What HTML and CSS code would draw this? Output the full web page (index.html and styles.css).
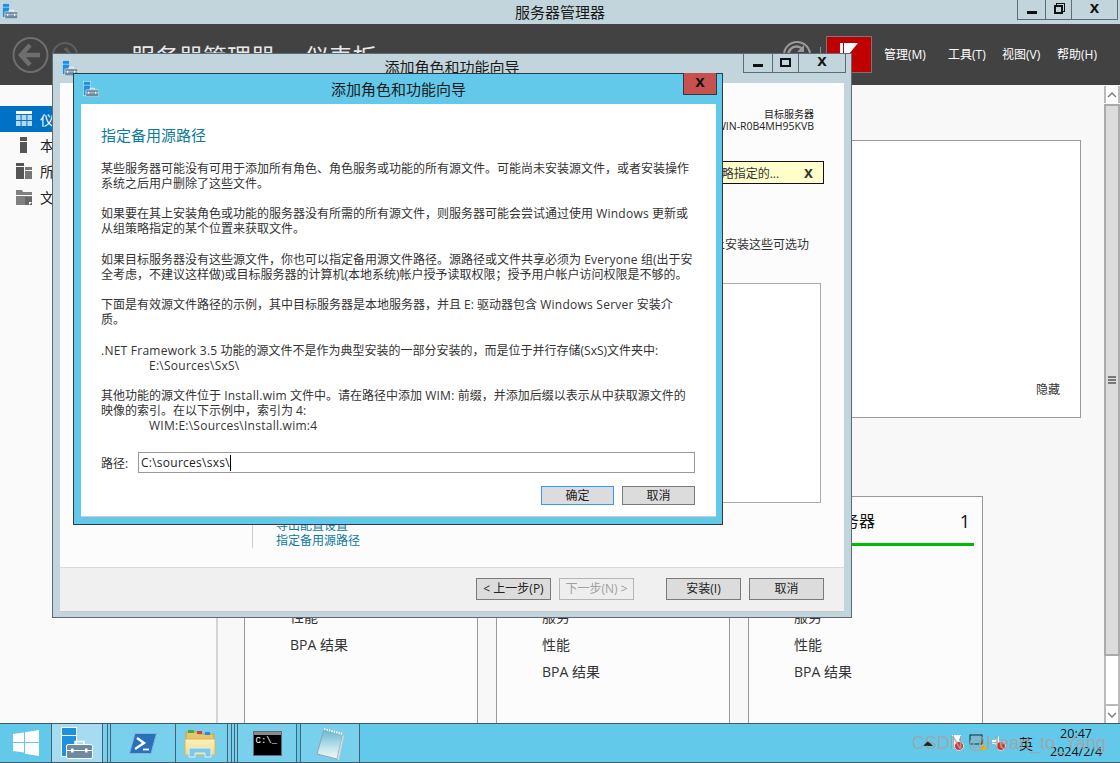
FILE: index.html
```html
<!DOCTYPE html>
<html lang="zh-CN">
<head>
<meta charset="utf-8">
<title>服务器管理器</title>
<link rel="stylesheet" href="styles.css">
</head>
<body>
<svg class="defs" width="0" height="0" aria-hidden="true">
  <defs>
    <linearGradient id="npg" x1="0" y1="0" x2="0" y2="1">
      <stop offset="0" stop-color="#5fb4cf"/><stop offset="0.6" stop-color="#bfe3ea"/><stop offset="1" stop-color="#f2f8f8"/>
    </linearGradient>
    <linearGradient id="fog" x1="0" y1="0" x2="0" y2="1">
      <stop offset="0" stop-color="#fdf2bd"/><stop offset="1" stop-color="#f3d789"/>
    </linearGradient>
  </defs>
  <symbol id="sm" viewBox="0 0 32 32">
    <rect x="0.5" y="0.5" width="15" height="29" fill="#1f8fe0" stroke="#fff"/>
    <line x1="1" y1="8.5" x2="15" y2="8.5" stroke="#fff"/>
    <path d="M14 18v-3.500h9V18" fill="none" stroke="#fff" stroke-width="1.600"/>
    <rect x="5.500" y="17.500" width="26" height="14" rx="1.500" fill="#6f8aa0" stroke="#fff"/>
    <line x1="6" y1="23.500" x2="31" y2="23.500" stroke="#fff"/>
    <rect x="10" y="21.500" width="2.500" height="4" fill="#fff"/>
    <rect x="24" y="21.500" width="2.500" height="4" fill="#fff"/>
  </symbol>
</svg>

<div class="app">
  <div class="titlebar">
    <svg class="tb-icon" width="16" height="16"><use href="#sm"/></svg>
    <span class="tb-title">服务器管理器</span>
    <div class="winbtns">
      <span class="wb wb-min"><i class="g-min"></i></span>
      <span class="wb wb-res"><i class="g-res"></i></span>
      <span class="wb wb-close">x</span>
    </div>
  </div>

  <header class="header">
    <svg class="nav-back" width="37" height="38" viewBox="0 0 37 38">
      <circle cx="18.500" cy="19" r="17" fill="none" stroke="#6e6e6e" stroke-width="2"/>
      <path d="M18 9l-9 10 9 10M9 19h19" fill="none" stroke="#6e6e6e" stroke-width="4.500"/>
    </svg>
    <svg class="nav-fwd" width="26" height="26" viewBox="0 0 26 26">
      <circle cx="13" cy="13" r="12" fill="none" stroke="#5f5f5f" stroke-width="2"/>
      <path d="M13 6l6 7-6 7M19 13H6" fill="none" stroke="#5f5f5f" stroke-width="3"/>
    </svg>
    <h1 class="h-title">服务器管理器 • 仪表板</h1>
    <svg class="refresh" width="30" height="30" viewBox="0 0 30 30">
      <circle cx="15" cy="15" r="13" fill="none" stroke="#9a9a9a" stroke-width="2"/>
      <path d="M21 10a8 8 0 1 0 1 7" fill="none" stroke="#9a9a9a" stroke-width="2.500"/>
      <path d="M22 5v7h-7z" fill="#9a9a9a"/>
    </svg>
    <span class="h-div"></span>
    <span class="flagbtn">
      <svg width="18" height="22" viewBox="0 0 18 22"><path d="M0 0h3v22H0zM4 0h14L4 17z" fill="#fff"/></svg>
    </span>
    <nav class="menu">
      <span>管理(M)</span><span>工具(T)</span><span>视图(V)</span><span>帮助(H)</span>
    </nav>
  </header>

  <div class="main">
    <aside class="sidebar">
      <div class="side-item side-on">
        <svg width="16" height="16" viewBox="0 0 16 16">
          <rect y="0" width="16" height="3" fill="#fff"/>
          <path d="M0 4h4.600v5H0zM5.600 4h4.800v5H5.600zM11.400 4H16v5h-4.600zM0 10h4.600v5H0zM5.600 10h4.800v5H5.600zM11.400 10H16v5h-4.600z" fill="#b5d8f0"/>
        </svg>
        <span>仪表板</span>
      </div>
      <div class="side-item">
        <svg width="16" height="16" viewBox="0 0 16 16">
          <rect x="4" width="7" height="4" fill="#555"/><rect x="4" y="5" width="7" height="11" fill="#555"/>
        </svg>
        <span>本地服务器</span>
      </div>
      <div class="side-item">
        <svg width="16" height="16" viewBox="0 0 16 16">
          <rect width="8" height="3" fill="#555"/><rect y="4" width="8" height="12" fill="#555"/>
          <rect x="9" y="4" width="7" height="3" fill="#777"/><rect x="9" y="8" width="7" height="8" fill="#777"/>
        </svg>
        <span>所有服务器</span>
      </div>
      <div class="side-item">
        <svg width="16" height="16" viewBox="0 0 16 16">
          <path d="M0 1h6l1 2h9v3H0zM0 7h16v9H0z" fill="#808080"/>
          <path d="M9 8h7v8H9z" fill="#666"/><path d="M13 13h3l-3 3z" fill="#fff"/>
        </svg>
        <span>文件和存储服务</span>
      </div>
    </aside>

    <section class="content">
      <div class="panel"><span>隐藏</span></div>
      <div class="cards">
        <article class="card">
          <div class="card-head"><span>本地服务器</span><b>1</b></div>
          <ul class="card-list"><li>可管理性</li><li>事件</li><li>性能</li><li>BPA 结果</li></ul>
        </article>
        <article class="card">
          <div class="card-head"><span>文件和存储服务</span><b>1</b></div>
          <ul class="card-list"><li>可管理性</li><li>事件</li><li>服务</li><li>性能</li><li>BPA 结果</li></ul>
        </article>
        <article class="card">
          <div class="card-head"><span>所有服务器</span><b>1</b></div>
          <ul class="card-list"><li>可管理性</li><li>事件</li><li>服务</li><li>性能</li><li>BPA 结果</li></ul>
        </article>
      </div>
    </section>

    <div class="scrollbar">
      <span class="sb-btn"><svg width="10" height="6" viewBox="0 0 10 6"><path d="M1 5l4-4 4 4" fill="none" stroke="#777" stroke-width="1.300"/></svg></span>
      <span class="sb-thumb"><i></i><i></i><i></i></span>
      <span class="sb-track"></span>
      <span class="sb-btn"><svg width="10" height="6" viewBox="0 0 10 6"><path d="M1 1l4 4 4-4" fill="none" stroke="#777" stroke-width="1.300"/></svg></span>
    </div>
  </div>

  <footer class="taskbar">
    <span class="task t-start">
      <svg width="26" height="26" viewBox="0 0 26 26"><path d="M0 4l11-1.500V12H0zM12 2.300L26 0v12H12zM0 13h11v9.500L0 21zM12 13h14v13l-14-2.300z" fill="#fff"/></svg>
    </span>
    <span class="task t-active"><svg width="32" height="32"><use href="#sm"/></svg></span>
    <span class="task t-sliver5"></span>
    <span class="task t-sliver3"></span>
    <span class="task t-ps">
      <svg width="28" height="21" viewBox="0 0 28 21">
        <path d="M6 .5h21.500L22 20.500H.5z" fill="#2a70b8" stroke="#7fb6e0"/>
        <path d="M8 5l7 5-9 6" fill="none" stroke="#fff" stroke-width="2.400"/>
        <path d="M14 16.500h6" stroke="#fff" stroke-width="1.800"/>
      </svg>
    </span>
    <span class="task t-ex">
      <svg class="ex-icon" width="32" height="30" viewBox="0 0 32 30">
        <path d="M2 4h11l2 2h15v18H2z" fill="#e8c56a" stroke="#c9a24a"/>
        <rect x="4" y="2" width="6" height="3" fill="#44aa44"/><rect x="13" y="3" width="5" height="3" fill="#cc4433"/><rect x="21" y="4" width="5" height="3" fill="#3388dd"/>
        <path d="M1 11h30v16H1z" fill="url(#fog)" stroke="#d6b45e"/>
        <path d="M5 29v-9h22v9h-6v-4H11v4z" fill="#7cc8ea" stroke="#d8f0fb"/>
      </svg>
    </span>
    <span class="task t-sliver4"></span>
    <span class="task t-sliver3"></span>
    <span class="task t-sliver3"></span>
    <span class="task t-cmd">
      <span class="cmd"><span class="cmd-bar"></span><span class="cmd-text">C:\_</span></span>
    </span>
    <span class="task t-np">
      <svg width="28" height="33" viewBox="0 0 28 33">
        <path d="M8 2l19 5-6 25L1 27z" fill="url(#npg)" stroke="#8aa6b4"/>
        <path d="M21 32l6-25 1 2-5 24z" fill="#cfd8dc"/>
        <path d="M8 2l19 5" stroke="#fff" stroke-dasharray="1.500 1" stroke-width="2"/>
      </svg>
    </span>
    <div class="tray">
      <svg class="tr-arrow" width="10" height="5" viewBox="0 0 10 5"><path d="M0 5l5-5 5 5z" fill="#222"/></svg>
      <svg width="16" height="18" viewBox="0 0 16 18"><path d="M3 1h1v14H3zM5 1h7l-2 5 2 5H5z" fill="#fff"/><circle cx="10" cy="12" r="4.500" fill="#d63030" stroke="#fff" stroke-width=".7"/></svg>
      <svg width="18" height="18" viewBox="0 0 18 18"><rect x="1" y="1" width="12" height="9" fill="none" stroke="#222"/><path d="M10 16l4-7 4 7z" fill="#f0b400"/></svg>
      <svg width="16" height="18" viewBox="0 0 16 18"><path d="M1 6h3l4-4v12l-4-4H1z" fill="#fff"/><circle cx="10" cy="12" r="4.500" fill="#d63030" stroke="#fff" stroke-width=".7"/></svg>
      <span class="tr-ime">英</span>
      <div class="clock"><span>20:47</span><span>2024/2/4</span></div>
    </div>
  </footer>
</div>

<div class="wizard">
  <div class="wiz-title">
    <svg class="wiz-icon" width="16" height="16"><use href="#sm"/></svg>
    <span class="tb-title">添加角色和功能向导</span>
    <div class="winbtns wiz-btns">
      <span class="wb wb-min2"><i class="g-min"></i></span>
      <span class="wb wb-res2"><i class="g-max"></i></span>
      <span class="wb wb-close2">x</span>
    </div>
  </div>
  <div class="wiz-inner">
    <div class="wiz-main">
      <div class="target"><p class="target-h">目标服务器</p><p>WIN-R0B4MH95KVB</p></div>
      <div class="notice"><span>您的部分源文件可能由组策略指定的...</span><b>x</b></div>
      <p class="wiz-intro">若要在此服务器上安装这些可选功</p>
      <div class="wiz-box"></div>
      <div class="wiz-links"><a>导出配置设置</a><a>指定备用源路径</a></div>
    </div>
    <div class="wiz-foot">
      <button class="btn">&lt; 上一步(P)</button>
      <button class="btn btn-off">下一步(N) &gt;</button>
      <button class="btn btn-install">安装(I)</button>
      <button class="btn">取消</button>
    </div>
  </div>
</div>

<div class="dialog">
  <div class="dlg-title">
    <svg class="dlg-icon" width="16" height="16"><use href="#sm"/></svg>
    <span class="tb-title">添加角色和功能向导</span>
    <span class="dlg-close">x</span>
  </div>
  <div class="dlg-body">
    <h2 class="dlg-h">指定备用源路径</h2>
    <p>某些服务器可能没有可用于添加所有角色、角色服务或功能的所有源文件。可能尚未安装源文件，或者安装操作<br>系统之后用户删除了这些文件。</p>
    <p>如果要在其上安装角色或功能的服务器没有所需的所有源文件，则服务器可能会尝试通过使用 <span class="lt">Windows</span> 更新或<br>从组策略指定的某个位置来获取文件。</p>
    <p>如果目标服务器没有这些源文件，你也可以指定备用源文件路径。源路径或文件共享必须为 <span class="lt">Everyone</span> 组(出于安<br>全考虑，不建议这样做)或目标服务器的计算机(本地系统)帐户授予读取权限；授予用户帐户访问权限是不够的。</p>
    <p>下面是有效源文件路径的示例，其中目标服务器是本地服务器，并且 E: 驱动器包含 <span class="lt">Windows Server</span> 安装介<br>质。</p>
    <p><span class="lt">.NET Framework 3.5</span> 功能的源文件不是作为典型安装的一部分安装的，而是位于并行存储(SxS)文件夹中:<br><span class="ind lt">E:\Sources\SxS\</span></p>
    <p>其他功能的源文件位于 <span class="lt">Install.wim</span> 文件中。请在路径中添加 <span class="lt">WIM:</span> 前缀，并添加后缀以表示从中获取源文件的<br>映像的索引。在以下示例中，索引为 4:<br><span class="ind lt">WIM:E:\Sources\Install.wim:4</span></p>
    <div class="path-row">
      <label class="path-l">路径:</label>
      <div class="path-in">C:\sources\sxs\<i class="caret"></i></div>
    </div>
    <div class="dlg-btns">
      <button class="btn dbtn dbtn-ok">确定</button>
      <button class="btn dbtn">取消</button>
    </div>
  </div>
</div>

<div class="watermark">CSDN @Heart_to_Yang</div>
</body>
</html>
```

FILE: styles.css
```css
* { box-sizing: border-box; }
html, body { margin: 0; padding: 0; }
body {
  position: relative;
  width: 1120px;
  height: 763px;
  overflow: hidden;
  font-family: "Open Sans", "Noto Sans CJK SC", sans-serif;
  font-size: 12px;
  color: #222;
  background: #f8f8f8;
}
p, h1, h2, ul { margin: 0; padding: 0; }
li { list-style: none; }
.defs { position: absolute; }
.app { display: flex; flex-direction: column; height: 763px; }

/* main title bar */
.titlebar {
  position: relative;
  flex: none;
  height: 24px;
  background: #c2d5dc;
  display: flex;
  align-items: center;
  justify-content: center;
}
.tb-title { font-size: 15px; line-height: 20px; color: #1a1a1a; }
.tb-icon { position: absolute; left: 2px; top: 3px; }
.winbtns { position: absolute; top: 0; right: 2px; display: flex; height: 20px; border: 1px solid #5f6b72; border-top: 0; }
.wb { display: flex; align-items: center; justify-content: center; border-left: 1px solid #5f6b72; padding-bottom: 3px; font: bold 17px/14px "Liberation Sans", sans-serif; color: #111; }
.wb:first-child { border-left: 0; }
.wb-min { width: 27px; }
.wb-res { width: 26px; }
.wb-close { width: 46px; }
.g-min { display: block; width: 10px; height: 3px; background: #111; margin-top: 9px; }
.g-res { display: block; width: 9px; height: 9px; margin-top: 3px; border: 2px solid #111; box-shadow: 2px -2px 0 -1px #c2d5dc, 2px -2px 0 0 #111; }
.g-max { display: block; width: 11px; height: 9px; margin-top: 3px; border: 2px solid #111; }

/* dark header */
.header {
  flex: none;
  height: 61px;
  background: #424242;
  display: flex;
  align-items: center;
  padding-left: 12px;
}
.nav-back { flex: none; }
.nav-fwd { flex: none; margin-left: 3px; }
.h-title {
  flex: none;
  margin: 4px 0 0 53px;
  width: 651px;
  font-size: 24px;
  font-weight: 400;
  word-spacing: 4px;
  line-height: 30px;
  color: #e8e8e8;
  white-space: nowrap;
}
.refresh { flex: none; }
.h-div { flex: none; width: 1px; height: 16px; margin: 0 5px 0 8px; background: #8a8a8a; }
.flagbtn {
  flex: none;
  width: 46px;
  height: 37px;
  padding-top: 6px;
  background: #c00000;
  border: 1px solid #777;
  display: flex;
  align-items: flex-start;
  justify-content: center;
}
.menu { display: grid; grid-template-columns: 64px 54px 55px auto; margin-left: 12px; color: #fff; white-space: nowrap; line-height: 16px; }

/* main area */
.main { flex: 1; min-height: 0; display: flex; overflow: hidden; }
.sidebar { flex: none; width: 218px; padding-top: 21px; background: #fafafa; border-right: 2px solid #d4d4d4; }
.side-item { height: 26px; display: flex; align-items: center; gap: 8px; padding-left: 16px; font-size: 14px; color: #222; }
.side-on { background: #0072c6; color: #fff; }
.content { flex: 1; min-width: 0; padding: 55px 23px 0 26px; }
.panel {
  height: 278px;
  background: #fff;
  border: 1px solid #999;
  display: flex;
  align-items: flex-end;
  justify-content: flex-end;
  padding: 0 20px 19px 0;
  line-height: 16px;
  color: #333;
}
.cards { display: flex; gap: 18px; margin-top: 78px; }
.card { flex: none; width: 234px; height: 240px; background: #fcfcfc; border: 1px solid #999; }
.card:last-child { width: 235px; }
.card-head {
  display: flex;
  justify-content: space-between;
  align-items: flex-start;
  height: 31px;
  margin: 15px 8px 0 19px;
  padding: 0 4px 0 27px;
  border-bottom: 3px solid #00bb00;
  box-sizing: content-box;
  font-size: 16px;
  line-height: 18px;
  color: #111;
}
.card-head b { font-size: 18px; font-weight: 400; }
.card-list { margin-top: 2px; padding-left: 45px; font-size: 14px; line-height: 27.500px; color: #333; }
.scrollbar { flex: none; width: 16px; display: flex; flex-direction: column; padding-top: 1px; }
.sb-btn { flex: none; height: 17px; background: #fff; border: 1px solid #bbb; border-width: 0 2px 0 2px; display: flex; align-items: center; justify-content: center; }
.sb-thumb {
  flex: none;
  height: 552px;
  margin-top: 1px;
  background: #dcdcdc;
  border: 2px solid #aaa;
  display: flex;
  flex-direction: column;
  align-items: center;
  justify-content: center;
  gap: 1px;
}
.sb-thumb i { display: block; width: 8px; height: 2px; background: #777; }
.sb-track { flex: 1; background: #fff; border: 1px solid #bbb; border-width: 0 2px 2px 2px; }

/* taskbar */
.taskbar {
  flex: none;
  height: 40px;
  display: flex;
  background: #62c9ea;
  border-top: 1px solid #3d5a68;
  border-bottom: 1px solid #3d5a68;
}
.task { flex: none; display: flex; align-items: center; justify-content: center; border-right: 1px solid #3d6577; }
.t-start { width: 52px; }
.t-active { width: 51px; background: #a6dcf1; }
.t-sliver5 { width: 5px; background: #79d0ec; }
.t-sliver3 { width: 3px; background: #79d0ec; }
.t-sliver4 { width: 4px; background: #79d0ec; }
.t-ps { width: 65px; background: #79d0ec; }
.t-ex { width: 52px; background: #79d0ec; }
.ex-icon { margin-right: 3px; }
.t-cmd { width: 59px; background: #79d0ec; }
.t-np { width: 60px; margin-left: 3px; background: #79d0ec; border-left: 1px solid #3d6577; }
.cmd { display: flex; flex-direction: column; width: 29px; height: 25px; background: #000; border: 1px solid #667; }
.cmd-bar { height: 3px; background: #8a8a8a; }
.cmd-text { font: 9px/13px "Liberation Mono", monospace; color: #fff; padding-left: 2px; white-space: nowrap; }
.tray { flex: 1; display: flex; align-items: center; padding-left: 563px; gap: 4px; }
.tr-arrow { margin-right: 12px; }
.tr-ime { font-size: 14px; color: #111; margin-left: 8px; }
.clock { display: flex; flex-direction: column; align-items: center; margin-left: 13px; font-size: 12.500px; line-height: 18px; color: #111; white-space: nowrap; }

/* wizard window */
.wizard {
  position: absolute;
  left: 52px;
  top: 53px;
  width: 800px;
  height: 565px;
  background: #c2d5dc;
  border: 1px solid #5f6b72;
  padding: 0 7px 5px;
  display: flex;
  flex-direction: column;
}
.wiz-title { position: relative; flex: none; height: 29px; padding-top: 3px; display: flex; justify-content: center; align-items: flex-start; }
.wiz-icon { position: absolute; left: 2px; top: 6px; }
.wiz-btns { top: -1px; right: -2px; }
.wb-min2 { width: 28px; }
.wb-res2 { width: 26px; }
.wb-close2 { width: 47px; }
.wiz-inner { flex: 1; min-height: 0; display: flex; flex-direction: column; background: #fcfcfc; border-bottom: 1px solid #c8c8c8; }
.wiz-main { flex: 1; min-height: 0; overflow: hidden; }
.target { padding: 25px 30px 0 0; text-align: right; font-size: 10.500px; line-height: 12px; color: #222; }
.target-h { font-size: 10px; }
.notice {
  display: flex;
  align-items: center;
  justify-content: flex-end;
  gap: 25px;
  height: 23px;
  margin: 29px 20px 0 192px;
  padding: 0 10px;
  background: #ffffcc;
  border: 1px solid #111;
  white-space: nowrap;
  color: #333;
}
.notice b { font: bold 16px/14px "Liberation Sans", sans-serif; }
.wiz-intro { margin-top: 53px; padding-right: 35px; text-align: right; line-height: 16px; color: #333; }
.wiz-box { height: 220px; margin: 30px 23px 0 205px; background: #fff; border: 1px solid #aaa; }
.wiz-links { margin: 15px 0 0 192px; padding-left: 23px; border-left: 1px solid #ccc; line-height: 15px; color: #0e7a9e; }
.wiz-links a { display: block; }
.wiz-foot {
  flex: none;
  height: 44px;
  background: #f0f0f0;
  border-top: 1px solid #d9d9d9;
  display: flex;
  align-items: flex-start;
  gap: 8px;
  padding: 10px 20px 0 0;
  justify-content: flex-end;
}
.btn {
  flex: none;
  width: 75px;
  height: 22px;
  padding: 0;
  background: #dcdcdc;
  border: 1px solid #7a7a7a;
  font: 12px/18px "Open Sans", "Noto Sans CJK SC", sans-serif;
  color: #222;
  white-space: nowrap;
}
.btn-off { background: #eee; border-color: #b5b5b5; color: #a0a0a0; }
.btn-install { margin-left: 24px; }

/* dialog */
.dialog {
  position: absolute;
  left: 73px;
  top: 73px;
  width: 650px;
  height: 452px;
  background: #62c9ea;
  border: 1px solid #2f3b42;
  padding: 0 6px 7px 7px;
  display: flex;
  flex-direction: column;
}
.dlg-title { position: relative; flex: none; height: 30px; display: flex; align-items: center; justify-content: center; }
.dlg-icon { position: absolute; left: 2px; top: 7px; }
.dlg-close {
  position: absolute;
  top: -1px;
  right: -1px;
  width: 34px;
  height: 22px;
  padding-bottom: 3px;
  background: #c75050;
  border: 1px solid #2f3b42;
  border-top: 0;
  display: flex;
  align-items: center;
  justify-content: center;
  font: bold 17px/14px "Liberation Sans", sans-serif;
  color: #111;
}
.dlg-body { flex: 1; min-height: 0; background: #fff; padding: 21px 21px 0 20px; border-bottom: 1px solid #ccc; white-space: nowrap; }
.dlg-h { font-size: 15px; font-weight: 400; line-height: 20px; color: #0e7a9e; margin-bottom: 15.500px; }
.dlg-body p { line-height: 15px; margin-bottom: 15.600px; color: #333; }
.lt { letter-spacing: 0.25px; }
.ind { padding-left: 48px; }
.path-row { display: flex; align-items: center; margin-top: -0.600px; padding-top: 4px; }
.path-l { width: 37px; color: #333; }
.path-in { flex: 1; height: 21px; border: 1px solid #999; padding-left: 2px; line-height: 18px; letter-spacing: 0.25px; color: #222; display: flex; align-items: center; }
.caret { display: block; width: 1px; height: 16px; background: #000; }
.dlg-btns { display: flex; justify-content: flex-end; gap: 8px; margin-top: 13px; }
.dbtn { width: 73px; height: 19px; line-height: 15px; }
.dbtn-ok { border-color: #3399ff; }

.watermark {
  position: absolute;
  left: 912px;
  top: 732px;
  font: 18px/22px "Liberation Sans", sans-serif;
  color: rgba(165, 165, 165, 0.9);
  white-space: nowrap;
}
```
